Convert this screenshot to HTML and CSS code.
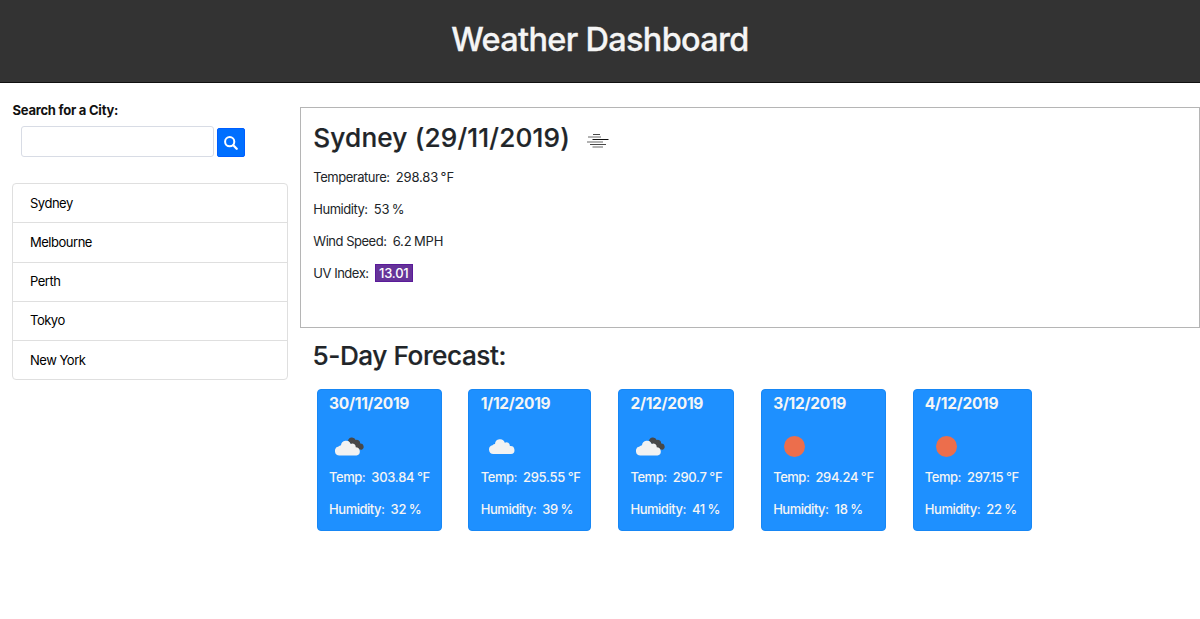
FILE: index.html
```html
<!DOCTYPE html>
<html lang="en">
<head>
<meta charset="utf-8">
<title>Weather Dashboard</title>
<link rel="stylesheet" href="styles.css">
</head>
<body>
<svg class="defs" width="0" height="0">
  <symbol id="cloud" viewBox="0 0 26 16"><path d="M4.500 16A4.400 4.400 0 0 1 3.500 7.300 3.800 3.800 0 0 1 6 6.100 5 5 0 0 1 15.800 4.800a3.300 3.300 0 0 1 5 3.200A4 4 0 0 1 22 16z" fill="#f2f2f2"/></symbol>
  <symbol id="broken" viewBox="0 0 30 19"><path d="M13 3.800a4 4 0 0 1 7.700-.8 3.500 3.500 0 0 1 4.500 3.600 3.300 3.300 0 0 1 1.800 6.200L20 12z" fill="#484848"/><path d="M4.500 18.500A4.500 4.500 0 0 1 3.500 9.600 3.800 3.800 0 0 1 6 8.300 5 5 0 0 1 15.700 7a3.300 3.300 0 0 1 5 3.200A4.200 4.200 0 0 1 21.500 18.500z" fill="#f2f2f2"/></symbol>
</svg>
<header class="banner"><h1>Weather Dashboard</h1></header>
<main class="layout">
  <aside class="sidebar">
    <label class="label" for="city">Search for a City:</label>
    <form class="search">
      <input class="input" id="city" type="text">
      <button class="button" type="button" aria-label="Search"><svg width="14" height="14" viewBox="0 0 14 14" fill="none" stroke="#fff" stroke-linecap="round"><circle cx="5.700" cy="5.700" r="4.600" stroke-width="2"/><path d="M9.300 9.300l3.400 3.400" stroke-width="2.300"/></svg></button>
    </form>
    <ul class="cities"><li>Sydney</li><li>Melbourne</li><li>Perth</li><li>Tokyo</li><li>New York</li></ul>
  </aside>
  <div class="content">
    <section class="current">
      <h2><span>Sydney (29/11/2019)</span><svg class="mist" width="23" height="15" viewBox="0 0 23 15" fill="none"><path d="M7 1.500h7M4 11.500h16" stroke="#484848" stroke-width="1"/><path d="M2 4h13M1 9h16M6.500 14h10.500" stroke="#9a9a9a" stroke-width="1.600"/><path d="M6.500 6.500h16" stroke="#111" stroke-width="1"/></svg></h2>
      <p>Temperature:<span class="value">298.83 °F</span></p>
      <p>Humidity:<span class="value">53 %</span></p>
      <p>Wind Speed:<span class="value">6.2 MPH</span></p>
      <p>UV Index:<span class="uv">13.01</span></p>
    </section>
    <h2 class="forecast-title">5-Day Forecast:</h2>
    <section class="cards">
      <article class="card first"><h3>30/11/2019</h3><div class="icon"><svg class="broken"><use href="#broken"/></svg></div><p>Temp:<span class="value">303.84 °F</span></p><p>Humidity:<span class="value">32 %</span></p></article>
      <article class="card second"><h3>1/12/2019</h3><div class="icon"><svg class="cloud"><use href="#cloud"/></svg></div><p>Temp:<span class="value">295.55 °F</span></p><p>Humidity:<span class="value">39 %</span></p></article>
      <article class="card third"><h3>2/12/2019</h3><div class="icon"><svg class="broken"><use href="#broken"/></svg></div><p>Temp:<span class="value">290.7 °F</span></p><p>Humidity:<span class="value">41 %</span></p></article>
      <article class="card fourth"><h3>3/12/2019</h3><div class="icon"><span class="sun"></span></div><p>Temp:<span class="value">294.24 °F</span></p><p>Humidity:<span class="value">18 %</span></p></article>
      <article class="card fifth"><h3>4/12/2019</h3><div class="icon"><span class="sun"></span></div><p>Temp:<span class="value">297.15 °F</span></p><p>Humidity:<span class="value">22 %</span></p></article>
    </section>
  </div>
</main>
</body>
</html>
```
FILE: styles.css
```css
* { box-sizing: border-box; }
body { margin: 0; background: #fff; color: #212529; font: 13px/20px Inter, "Liberation Sans", sans-serif; letter-spacing: -.48px; }
h1, h2, h3, p, ul { margin: 0; }
.defs { display: block; height: 0; }
.banner { height: 83px; background: #333; border-bottom: 1px solid #111; text-align: center; color: #f5f5f5; }
.banner h1 { font-size: 32.500px; line-height: 39px; padding-top: 20px; font-weight: 500; letter-spacing: -.7px; -webkit-text-stroke: .3px currentColor; }
.layout { display: flex; }
.sidebar { width: 300px; padding: 17px 12.500px 0; color: #111; }
.label { display: block; font-weight: 700; letter-spacing: -.24px; }
.search { display: flex; gap: 3px; padding: 6px 0 0 8px; height: 63px; }
.input { width: 193px; height: 31px; border: 1px solid #d8dce5; border-radius: 3px; background: #fff; padding: 4px 8px; }
.button { width: 28px; height: 29px; margin-top: 2px; padding: 1px 0 0; border: 1px solid #005eff; border-radius: 2px; background: #006fff; display: flex; align-items: center; justify-content: center; }
.cities { list-style: none; padding: 0; margin-left: -.5px; border: 1px solid #dfdfdf; border-radius: 4px; }
.cities li { height: 39.250px; padding: 9px 17px; color: #000; }
.cities li:first-child { height: 38.400px; }
.cities li:last-child { height: 38.900px; }
.cities li + li { border-top: 1px solid #dfdfdf; padding-top: 8.500px; }
.content { flex: 1; padding-top: 24px; }
.current { height: 221px; border: 1px solid #b5b5b5; padding: 14px 12.300px; }
h2 { font-size: 26.200px; line-height: 32px; font-weight: 500; letter-spacing: .15px; -webkit-text-stroke: .2px currentColor; }
.current h2 { display: flex; align-items: center; height: 32px; margin-bottom: 13px; }
.mist { margin: 5px 0 0 16px; }
p { height: 20px; margin-bottom: 12px; white-space: nowrap; }
.value { margin-left: 6.200px; letter-spacing: -.15px; word-spacing: -1px; }
.uv { display: inline-block; margin-left: 6.500px; width: 37.500px; height: 18px; line-height: 16px; text-align: center; background: #663399; border: 1px solid #5a1a9a; color: #fff; font-weight: 500; letter-spacing: -.25px; }
.forecast-title { margin: 12px 0 0 12.500px; height: 49px; letter-spacing: -.45px; }
.cards { display: flex; gap: 26.700px; padding-left: 16.800px; }
.card { height: 142px; padding: 4px 11.300px; background: #1e90ff; border: 1px solid #1787f5; border-radius: 4px; color: #f5f5f5; font-weight: 500; }
.card h3 { font-size: 15.500px; line-height: 20px; font-weight: 700; letter-spacing: -.28px; margin-bottom: 22px; }
.card .value { margin-left: 6px; letter-spacing: -.3px; word-spacing: -.5px; }
.first, .fourth { width: 125px; }
.second { width: 123px; }
.third { width: 116px; }
.fifth { width: 119px; }
.icon { display: flex; align-items: flex-start; height: 31px; padding-left: 6px; }
.broken { width: 30px; height: 19px; margin-top: 1px; }
.cloud { width: 26px; height: 16px; margin: 2px 0 0 2px; }
.sun { width: 21px; height: 21px; margin: 0 0 0 5px; border-radius: 50%; background: #ec6e4c; }
```
